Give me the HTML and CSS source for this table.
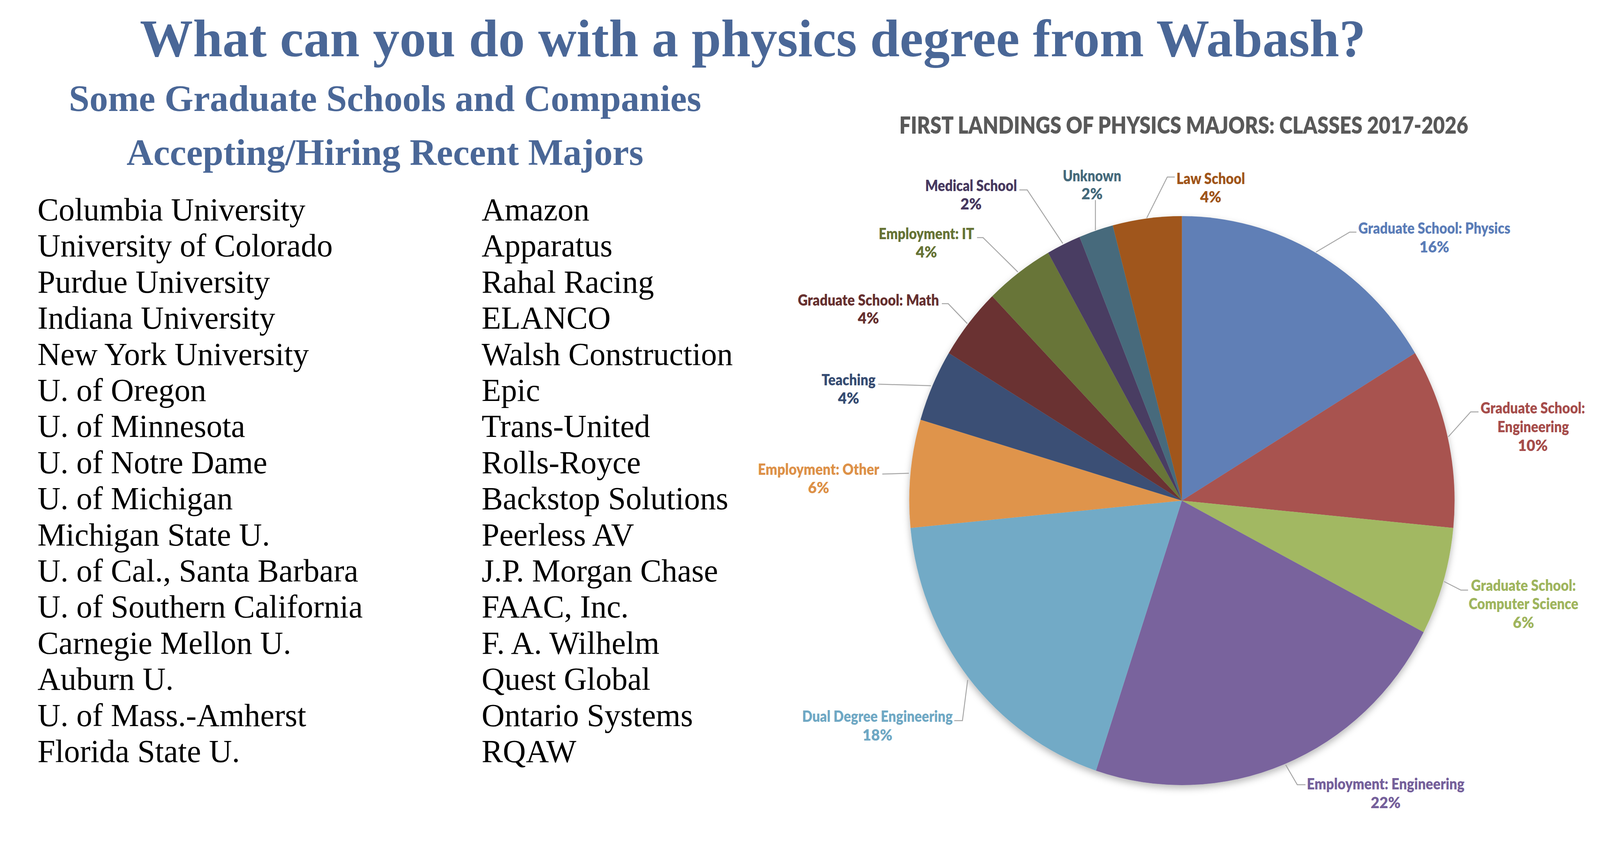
FILE: index.html
```html
<!DOCTYPE html>
<html lang="en">
<head>
<meta charset="utf-8">
<title>What can you do with a physics degree from Wabash?</title>
<link rel="stylesheet" href="styles.css">
</head>
<body>
<header class="title-bar">
  <h1 class="main-title">What can you do with a physics degree from Wabash?</h1>
</header>
<main class="content">
  <section class="lists">
    <h2 class="subtitle">Some Graduate Schools and Companies<br>Accepting/Hiring Recent Majors</h2>
    <div class="columns">
      <ul class="col">
        <li>Columbia University</li>
        <li>University of Colorado</li>
        <li>Purdue University</li>
        <li>Indiana University</li>
        <li>New York University</li>
        <li>U. of Oregon</li>
        <li>U. of Minnesota</li>
        <li>U. of Notre Dame</li>
        <li>U. of Michigan</li>
        <li>Michigan State U.</li>
        <li>U. of Cal., Santa Barbara</li>
        <li>U. of Southern California</li>
        <li>Carnegie Mellon U.</li>
        <li>Auburn U.</li>
        <li>U. of Mass.-Amherst</li>
        <li>Florida State U.</li>
      </ul>
      <ul class="col">
        <li>Amazon</li>
        <li>Apparatus</li>
        <li>Rahal Racing</li>
        <li>ELANCO</li>
        <li>Walsh Construction</li>
        <li>Epic</li>
        <li>Trans-United</li>
        <li>Rolls-Royce</li>
        <li>Backstop Solutions</li>
        <li>Peerless AV</li>
        <li>J.P. Morgan Chase</li>
        <li>FAAC, Inc.</li>
        <li>F. A. Wilhelm</li>
        <li>Quest Global</li>
        <li>Ontario Systems</li>
        <li>RQAW</li>
      </ul>
    </div>
  </section>
  <figure class="chart">
    <svg class="chart-svg" viewBox="2056 168 2216 1984" preserveAspectRatio="none" xmlns="http://www.w3.org/2000/svg">
      <defs>
        <filter id="pieShadow" x="-10%" y="-10%" width="120%" height="125%">
          <feDropShadow dx="0" dy="8" stdDeviation="9" flood-color="#000" flood-opacity="0.28"/>
        </filter>
      </defs>
      <text class="chart-title" x="3161" y="342" text-anchor="middle" textLength="1519" lengthAdjust="spacingAndGlyphs">FIRST LANDINGS OF PHYSICS MAJORS: CLASSES 2017-2026</text>

      <g class="pie" filter="url(#pieShadow)">
        <path class="s-phys" d="M3156 1281 L3156 553 A728 728 0 0 1 3778.5 903.6 Z"/>
        <path class="s-eng" d="M3156 1281 L3778.5 903.6 A728 728 0 0 1 3880.6 1350.9 Z"/>
        <path class="s-cs" d="M3156 1281 L3880.6 1350.9 A728 728 0 0 1 3801.4 1617.7 Z"/>
        <path class="s-empeng" d="M3156 1281 L3801.4 1617.7 A728 728 0 0 1 2926.6 1971.9 Z"/>
        <path class="s-dual" d="M3156 1281 L2926.6 1971.9 A728 728 0 0 1 2431.4 1350.9 Z"/>
        <path class="s-other" d="M3156 1281 L2431.4 1350.9 A728 728 0 0 1 2458.1 1073.9 Z"/>
        <path class="s-teach" d="M3156 1281 L2458.1 1073.9 A728 728 0 0 1 2533.5 903.6 Z"/>
        <path class="s-math" d="M3156 1281 L2533.5 903.6 A728 728 0 0 1 2649.5 758.0 Z"/>
        <path class="s-it" d="M3156 1281 L2649.5 758.0 A728 728 0 0 1 2798.8 646.7 Z"/>
        <path class="s-med" d="M3156 1281 L2798.8 646.7 A728 728 0 0 1 2882.9 606.2 Z"/>
        <path class="s-unk" d="M3156 1281 L2882.9 606.2 A728 728 0 0 1 2971.3 576.8 Z"/>
        <path class="s-law" d="M3156 1281 L2971.3 576.8 A728 728 0 0 1 3156 553 Z"/>
      </g>

      <g class="leaders">
        <polyline points="3514,645 3604,594 3622,594"/>
        <polyline points="3867,1118 3927,1054 3948,1054"/>
        <polyline points="3856,1488 3901,1510 3920,1510"/>
        <polyline points="3433,1957 3464,2008 3486,2008"/>
        <polyline points="2584,1740 2570,1844 2548,1844"/>
        <polyline points="2427,1211 2356,1213"/>
        <polyline points="2486,987 2345,983"/>
        <polyline points="2583,828 2532,777 2515,777"/>
        <polyline points="2718,696 2625,608 2609,608"/>
        <polyline points="2838,623 2743,486 2722,486"/>
        <polyline points="2925,589 2925,512"/>
        <polyline points="3062,558 3117,453 3137,453"/>
      </g>

      <g class="labels" text-anchor="middle">
        <text class="l-phys" x="3830" y="598" textLength="406" lengthAdjust="spacingAndGlyphs">Graduate School: Physics</text>
        <text class="l-phys" x="3830" y="646">16%</text>

        <text class="l-eng" x="4093" y="1058" textLength="279" lengthAdjust="spacingAndGlyphs">Graduate School:</text>
        <text class="l-eng" x="4094" y="1106" textLength="191" lengthAdjust="spacingAndGlyphs">Engineering</text>
        <text class="l-eng" x="4093" y="1154">10%</text>

        <text class="l-cs" x="4068" y="1512" textLength="280" lengthAdjust="spacingAndGlyphs">Graduate School:</text>
        <text class="l-cs" x="4068" y="1559" textLength="293" lengthAdjust="spacingAndGlyphs">Computer Science</text>
        <text class="l-cs" x="4068" y="1607">6%</text>

        <text class="l-empeng" x="3700" y="2020" textLength="421" lengthAdjust="spacingAndGlyphs">Employment: Engineering</text>
        <text class="l-empeng" x="3700" y="2068">22%</text>

        <text class="l-dual" x="2343" y="1847" textLength="402" lengthAdjust="spacingAndGlyphs">Dual Degree Engineering</text>
        <text class="l-dual" x="2343" y="1895">18%</text>

        <text class="l-other" x="2186" y="1215" textLength="324" lengthAdjust="spacingAndGlyphs">Employment: Other</text>
        <text class="l-other" x="2186" y="1262">6%</text>

        <text class="l-teach" x="2266" y="986" textLength="144" lengthAdjust="spacingAndGlyphs">Teaching</text>
        <text class="l-teach" x="2266" y="1033">4%</text>

        <text class="l-math" x="2319" y="782" textLength="377" lengthAdjust="spacingAndGlyphs">Graduate School: Math</text>
        <text class="l-math" x="2319" y="828">4%</text>

        <text class="l-it" x="2474" y="612" textLength="255" lengthAdjust="spacingAndGlyphs">Employment: IT</text>
        <text class="l-it" x="2474" y="659">4%</text>

        <text class="l-med" x="2593" y="489" textLength="245" lengthAdjust="spacingAndGlyphs">Medical School</text>
        <text class="l-med" x="2593" y="536">2%</text>

        <text class="l-unk" x="2916" y="464" textLength="156" lengthAdjust="spacingAndGlyphs">Unknown</text>
        <text class="l-unk" x="2916" y="510">2%</text>

        <text class="l-law" x="3233" y="471" textLength="183" lengthAdjust="spacingAndGlyphs">Law School</text>
        <text class="l-law" x="3233" y="518">4%</text>
      </g>
    </svg>
  </figure>
</main>
</body>
</html>
```

FILE: styles.css
```css
:root {
  /* one unit of the 4272px-wide design, scaled to the real viewport width */
  --u: calc(100vw / 4272);
}

html, body {
  margin: 0;
  padding: 0;
  background: #ffffff;
}

body {
  width: 100vw;
  height: 2152px;
  overflow: hidden;
  font-family: "Liberation Serif", "Times New Roman", serif;
  color: #000;
}

.title-bar {
  width: calc(4020 * var(--u));
  padding-top: 28px;
}

.main-title {
  margin: 0;
  font-size: calc(141.8 * var(--u));
  line-height: 140px;
  font-weight: bold;
  color: #4a6797;
  text-align: center;
  white-space: nowrap;
}

.content {
  display: flex;
  align-items: flex-start;
}

.lists {
  width: calc(2056 * var(--u));
  flex: none;
}

.subtitle {
  margin: 15px 0 0;
  font-size: calc(99 * var(--u));
  line-height: 138px;
  font-weight: bold;
  color: #4a6797;
  text-align: center;
  white-space: nowrap;
}

.columns {
  display: grid;
  grid-template-columns: calc(1186 * var(--u)) auto;
  padding-left: calc(100 * var(--u));
  margin-top: 32px;
}

.col {
  list-style: none;
  margin: 0;
  padding: 0;
  font-size: calc(85 * var(--u));
  line-height: 92.4px;
  white-space: nowrap;
}

.chart {
  margin: 0;
  flex: none;
  width: calc(2216 * var(--u));
  height: 1984px;
  overflow: visible;
}

.chart-svg {
  display: block;
  width: 100%;
  height: 1984px;
  overflow: visible;
}

.chart-title {
  font-family: Lato, "Liberation Sans", sans-serif;
  font-weight: 800;
  font-size: 60px;
  fill: #595959;
}

.leaders polyline {
  fill: none;
  stroke: #a6a6a6;
  stroke-width: 2.5;
}

.labels text {
  font-family: Lato, "Liberation Sans", sans-serif;
  font-weight: 800;
  font-size: 40px;
}

.s-phys { fill: #607fb6; }
.s-eng { fill: #a85250; }
.s-cs { fill: #a2b862; }
.s-empeng { fill: #79649d; }
.s-dual { fill: #72aac6; }
.s-other { fill: #df944c; }
.s-teach { fill: #3a5075; }
.s-math { fill: #6a3032; }
.s-it { fill: #677438; }
.s-med { fill: #4a3c62; }
.s-unk { fill: #466b7c; }
.s-law { fill: #a0571a; }

.l-phys { fill: #5b7db8; }
.l-eng { fill: #a64d4b; }
.l-cs { fill: #9fb55e; }
.l-empeng { fill: #75609b; }
.l-dual { fill: #6fa8c4; }
.l-other { fill: #dd9148; }
.l-teach { fill: #364c72; }
.l-math { fill: #66302f; }
.l-it { fill: #667335; }
.l-med { fill: #47395f; }
.l-unk { fill: #456a7b; }
.l-law { fill: #a05519; }
```
